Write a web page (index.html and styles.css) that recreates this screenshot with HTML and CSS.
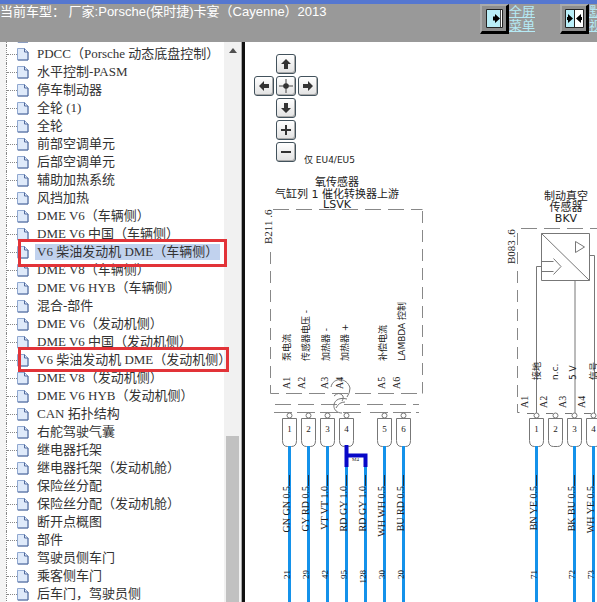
FILE: index.html
```html
<!DOCTYPE html>
<html lang="zh-CN">
<head>
<meta charset="utf-8">
<title>Porsche Cayenne 2013</title>
<link rel="stylesheet" href="styles.css">
</head>
<body>
<header class="topbar">
  <h1 class="vehicle">当前车型： 厂家:Porsche(保时捷)卡宴（Cayenne）2013</h1>
  <nav class="tools">
    <div class="tool">
      <button class="tool-button" type="button" aria-label="全屏菜单">
        <svg viewBox="0 0 17 19" width="17" height="19"><path d="M.5.5h16v18H.5z" fill="#b9eef8" stroke="#222"/><path d="M14 1h2v17h-2z" fill="#fff"/><path d="M14.500 1v17" stroke="#444"/><path d="M7 7.500h2V5l5 4.500-5 4.500v-2.500H7z"/></svg>
      </button>
      <a class="tool-link" href="#menu">全屏<br>菜单</a>
    </div>
    <div class="tool">
      <button class="tool-button" type="button" aria-label="默认视图">
        <svg viewBox="0 0 19 19" width="19" height="19"><path d="M.5.5h18v18H.5z" fill="#fff" stroke="#222"/><path d="M1 1h8v17H1z" fill="#b9eef8"/><path d="M9.500 1v17" stroke="#222"/><path d="M2 8h1V5l5 4.500L3 14v-3H2zM17 8h-1V5l-5 4.500 5 4.500v-3h1z"/></svg>
      </button>
      <a class="tool-link" href="#view">默认<br>视图</a>
    </div>
  </nav>
</header>
<main class="workspace">
  <aside class="sidebar">
    <ul class="tree" id="tree"></ul>
    <div class="scrollbar">
      <div class="scroll-up"></div>
      <div class="scroll-thumb"></div>
    </div>
  </aside>
  <section class="viewer">
    <div class="pad">
      <button class="pad-button up" type="button" aria-label="上"><svg viewBox="0 0 16 16"><path d="M8 3l5 5h-3v5H6V8H3z"/></svg></button>
      <button class="pad-button left" type="button" aria-label="左"><svg viewBox="0 0 16 16"><path d="M3 8l5-5v3h5v4H8v3z"/></svg></button>
      <button class="pad-button center" type="button" aria-label="居中"><svg viewBox="0 0 16 16"><path d="M8 1v14M1 8h14" stroke="#444"/><circle cx="8" cy="8" r="2.800"/></svg></button>
      <button class="pad-button right" type="button" aria-label="右"><svg viewBox="0 0 16 16"><path d="M13 8L8 3v3H3v4h5v3z"/></svg></button>
      <button class="pad-button down" type="button" aria-label="下"><svg viewBox="0 0 16 16"><path d="M8 13l5-5h-3V3H6v5H3z"/></svg></button>
      <button class="pad-button in" type="button" aria-label="放大"><svg viewBox="0 0 16 16"><path d="M7 3h2v4h4v2H9v4H7V9H3V7h4z"/></svg></button>
      <button class="pad-button out" type="button" aria-label="缩小"><svg viewBox="0 0 16 16"><path d="M3 7h10v2H3z"/></svg></button>
    </div>
    <svg class="diagram" id="diagram" viewBox="245 42 352 560" width="352" height="560">
      <text class="note" x="304" y="163">仅 EU4/EU5</text>
      <g class="title">
        <text x="337" y="186">氧传感器</text>
        <text x="337" y="198">气缸列 1 催化转换器上游</text>
        <text x="337" y="208">LSVK</text>
        <text x="566" y="200">制动真空</text>
        <text x="566" y="211">传感器</text>
        <text x="566" y="222">BKV</text>
      </g>
      <g class="dash">
        <path d="M273 209.500H422.500"/>
        <path d="M422.500 211V393.500" stroke-dasharray="12 7"/>
        <path d="M270.500 252V386" stroke-dasharray="12 7"/>
        <path d="M270.500 386v7.500H422.500"/>
        <path d="M275 404.500H419"/>
        <path d="M274 412.500H362M370 412.500H419" stroke-dasharray="18 5"/>
        <path d="M521 228.500H597"/>
        <path d="M517.500 233V412.500" stroke-dasharray="12 7"/>
      </g>
      <g class="thin">
        <path d="M541.500 233.500h48v47h-48zl48 47M575.500 241.500v11l9-5.500zM541.500 261.500h12M541.500 271.500h12M553.500 258.500l7.500 8-7.500 8"/>
        <path d="M541.500 266.500h-5V413M575 280.500V413M589.500 255.500h5V413"/>
        <path d="M517.500 412.500h2M527 413.500h7M546 413.500h7M565 413.500h7M584 413.500h7"/>
        <path d="M331 387C333 377 347 377 350 388Q350 393 347 397M334 396Q339 391 343 396Q344 399 342 401M347 399C331 395 330 413 342 413M345 402Q339 402 336 408"/>
      </g>
    </svg>
  </section>
</main>
<script src="app.js"></script>
</body>
</html>
```
FILE: styles.css
```css
* {
  box-sizing: border-box;
}

body {
  margin: 0;
  height: 100vh;
  display: flex;
  flex-direction: column;
  overflow: hidden;
  background: #fff;
  font-family: "Liberation Serif", "Noto Sans CJK SC", serif;
  font-size: 13px;
  color: #333;
}

.topbar {
  display: flex;
  justify-content: space-between;
  flex: 0 0 42px;
  border-top: 4px solid #5577d0;
  background: #999;
  font-family: "Liberation Sans", "Noto Sans CJK SC", sans-serif;
  color: #fff;
  overflow: hidden;
}

.vehicle {
  margin: 0;
  font-size: 13px;
  font-weight: normal;
  line-height: 16px;
  white-space: nowrap;
}

.tools {
  display: flex;
  flex: 0 0 117px;
  gap: 25px;
  overflow: hidden;
}

.tool {
  display: flex;
  flex: none;
  align-items: flex-start;
}

.tool-button {
  display: flex;
  align-items: center;
  justify-content: center;
  width: 29px;
  height: 30px;
  padding: 0;
  border: 2px solid;
  border-color: #aaa #000 #000 #aaa;
  border-right-width: 3px;
  border-bottom-width: 3px;
  background: #8e8e8e;
}

.tool-button svg {
  flex: none;
}

.tool-link {
  color: #b5eaf5;
  line-height: 14px;
  padding-top: 1px;
  white-space: nowrap;
}

.workspace {
  display: flex;
  flex: 1;
  min-height: 0;
}

.sidebar {
  display: flex;
  flex: 0 0 245px;
  border-right: 3px solid #111;
  overflow: hidden;
  background: #fff;
}

.tree {
  flex: 1;
  min-width: 0;
  margin: -15px 0 0;
  padding: 0 0 0 6px;
  list-style: none;
  background: linear-gradient(to right, #f4f4f4 6px, #fff 6px);
}

.node {
  position: relative;
  display: flex;
  align-items: center;
  height: 18px;
  border-left: 1px dotted #888;
  white-space: nowrap;
}

.node::before {
  content: "";
  flex: none;
  width: 10px;
  border-top: 1px dotted #888;
}

.page-icon {
  flex: none;
  width: 12px;
  height: 14px;
}

.node-link {
  flex: none;
  margin-left: 6px;
  padding: 0 2px;
  line-height: 16px;
  color: #333;
  text-decoration: none;
}

.selected .node-link {
  background: #c1d2ee;
}

.mark {
  position: absolute;
  z-index: 1;
  top: -4px;
  left: 11px;
  width: 209px;
  height: 28px;
  border: 3px solid #e23338;
}

.mark.wide {
  width: 211px;
  height: 25px;
}

.scrollbar {
  display: flex;
  flex-direction: column;
  justify-content: space-between;
  flex: 0 0 18px;
  padding: 6px 2px 0;
  border-right: 1px solid #aaa;
  background: #f1f1f1;
}

.scroll-up {
  align-self: center;
  border: 4px solid transparent;
  border-top: 0;
  border-bottom: 5px solid #505050;
}

.scroll-thumb {
  height: 30%;
  background: #c1c1c1;
}

.viewer {
  position: relative;
  flex: 1;
  min-width: 0;
  overflow: hidden;
}

.pad {
  position: absolute;
  top: 12px;
  left: 9px;
  display: grid;
  grid-template-columns: repeat(3, 20px);
  grid-auto-rows: 20px;
  gap: 2px;
  grid-template-areas: ". up ." "left center right" ". down ." ". in ." ". out .";
}

.pad-button {
  padding: 1px;
  border: 1px solid #42525c;
  border-radius: 3px;
  background: linear-gradient(#fff, #e2e2e2);
  box-shadow: inset -1px -1px 0 #aaa;
}

.pad-button svg {
  display: block;
  width: 16px;
  height: 16px;
  fill: #333;
}

.up { grid-area: up; }
.left { grid-area: left; }
.center { grid-area: center; }
.right { grid-area: right; }
.down { grid-area: down; }
.in { grid-area: in; }
.out { grid-area: out; }

.diagram {
  display: block;
  fill: #222;
}

.note,
.signal {
  font-family: "DejaVu Sans", "Noto Sans CJK SC", sans-serif;
  font-size: 9px;
}

.title {
  font-family: "DejaVu Sans", "Noto Sans CJK SC", sans-serif;
  font-size: 11px;
  text-anchor: middle;
}

.pin {
  font-size: 10px;
}

.part {
  font-size: 11px;
}

.code {
  font-size: 10px;
  text-anchor: end;
}

.number {
  font-size: 9px;
  text-anchor: end;
}

.plug-number {
  font-size: 9px;
  text-anchor: middle;
}

.splice-label {
  font-size: 5px;
}

.dash {
  fill: none;
  stroke: #888;
  stroke-dasharray: 16 7;
}

.thin {
  fill: none;
  stroke: #777;
}

.wire {
  stroke: #1492ea;
  stroke-width: 3;
}

.lead {
  stroke: #234;
}

.splice {
  fill: none;
  stroke: #0808c8;
  stroke-width: 4;
}
```
FILE: app.js
```js
const items = [
  "", "PDCC（Porsche 动态底盘控制）", "水平控制-PASM", "停车制动器", "全轮 (1)", "全轮",
  "前部空调单元", "后部空调单元", "辅助加热系统", "风挡加热", "DME V6（车辆侧）",
  "DME V6 中国（车辆侧）", "V6 柴油发动机 DME（车辆侧）", "DME V8（车辆侧）",
  "DME V6 HYB（车辆侧）", "混合-部件", "DME V6（发动机侧）", "DME V6 中国（发动机侧）",
  "V6 柴油发动机 DME（发动机侧）", "DME V8（发动机侧）", "DME V6 HYB（发动机侧）",
  "CAN 拓扑结构", "右舵驾驶气囊", "继电器托架", "继电器托架（发动机舱）", "保险丝分配",
  "保险丝分配（发动机舱）", "断开点概图", "部件", "驾驶员侧车门", "乘客侧车门",
  "后车门，驾驶员侧"
];
const page = '<svg class="page-icon" viewBox="0 0 12 14"><path d="M.5 1.500h7l3.500 3.500v8H.5z" fill="#dfeafa" stroke="#90a8d0"/><path d="M7.500 1.500V5H11v8H1" fill="none" stroke="#526a9c"/></svg>';
document.getElementById("tree").innerHTML = items.map((name, i) => {
  const mark = i === 12 ? '<span class="mark"></span>' : i === 18 ? '<span class="mark wide"></span>' : "";
  const link = name ? `<a class="node-link" href="#n${i}">${name}</a>` : "";
  return `<li class="node${i === 12 ? " selected" : ""}">${page}${link}${mark}</li>`;
}).join("");

const up = (cls, x, y, text) => `<text class="${cls}" transform="translate(${x} ${y}) rotate(-90)">${text}</text>`;
const labels = [
  ["part", 272, 244, "B211 .6"], ["part", 515, 264, "B083 .6"],
  ["signal", 290, 361, "泵电流"], ["signal", 309, 361, "传感器电压 -"],
  ["signal", 329, 361, "加热器 -"], ["signal", 348, 361, "加热器 +"],
  ["signal", 386, 361, "补偿电流"], ["signal", 405, 361, "LAMBDA 控制"],
  ["pin", 290, 389, "A1"], ["pin", 305, 389, "A2"], ["pin", 328, 389, "A3"],
  ["pin", 343, 389, "A4"], ["pin", 385, 389, "A5"], ["pin", 400, 389, "A6"],
  ["signal", 540, 380, "接地"], ["signal", 558, 380, "n.c."],
  ["signal", 576, 380, "5 V"], ["signal", 597, 380, "信号"],
  ["pin", 528, 408, "A1"], ["pin", 547, 408, "A2"], ["pin", 566, 408, "A3"], ["pin", 585, 408, "A4"]
];
const wires = [
  [289, 1, "GN GN 0.5", 21], [308, 2, "GY RD 0.5", 29], [327, 3, "VT VT 1.0", 42],
  [346, 4, "RD GY 1.0", 95], [365, 0, "RD GY 1.0", 128], [384, 5, "WH WH 0.5", 30],
  [403, 6, "BU RD 0.5", 20], [536, 1, "BN YE 0.5", 71], [555, 2, "", ""],
  [574, 3, "BK BU 0.5", 72], [593, 4, "WH YE 0.5", 73]
];
const drawWire = ([left, plug, code, number]) => {
  const x = left + 0.5;
  let out = "";
  if (plug) {
    out += `<g class="thin"><circle cx="${x}" cy="415.5" r="2.5"/><path d="M${x - 7} 418.5h14v22q0 6-5 6h-4q-5 0-5-6z"/></g>`;
    out += `<text class="plug-number" x="${x}" y="432">${plug}</text>`;
  }
  if (code) {
    out += `<path class="wire" d="M${x} ${plug ? 446 : 466}V602"/><path class="lead" d="M${x} 475V486"/>`;
    out += up("code", left + 1, 486, code) + up("number", left + 1, 570, number);
  }
  return out;
};
document.getElementById("diagram").insertAdjacentHTML("beforeend",
  labels.map(l => up(...l)).join("") + wires.map(drawWire).join("") +
  '<path class="splice" d="M346.500 445V467M346.500 455.500H365.500V467"/><text class="splice-label" x="352" y="461">M4</text>');
```
